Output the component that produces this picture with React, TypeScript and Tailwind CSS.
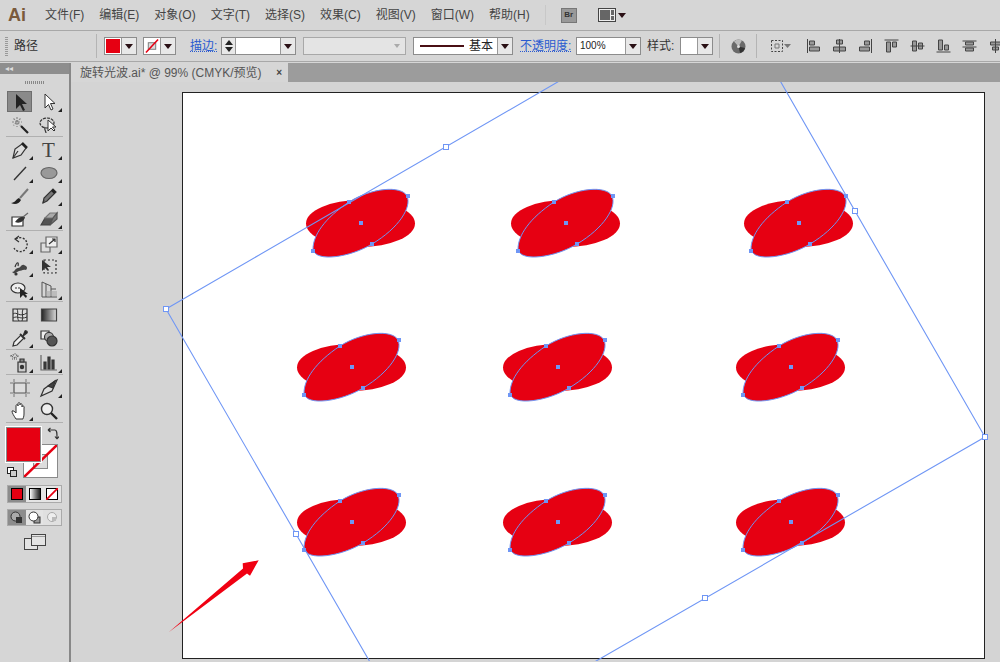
import type { ReactNode } from "react";

const font = { fontFamily: '"Liberation Sans", "Noto Sans CJK SC", sans-serif' };
const menus = ["文件(F)", "编辑(E)", "对象(O)", "文字(T)", "选择(S)", "效果(C)", "视图(V)", "窗口(W)", "帮助(H)"];

const RED = "#e60012";
const BLUE = "#6f96f5";

const Ico = ({ children, size = 20 }: { children: ReactNode; size?: number }) => (
  <svg width={size} height={size} viewBox="0 0 20 20" fill="none" stroke="#333" strokeWidth="1.2">
    {children}
  </svg>
);

const toolSections: { icon: ReactNode; corner?: boolean }[][][] = [
  [
    [
      { icon: <Ico><path d="M6 2V17L10 13L13 19L15 18L12 12H17Z" fill="#222" stroke="none" /></Ico> },
      { icon: <Ico><path d="M6 2V16L9.500 12.500L12 18L14 17L11.500 11.500H16Z" fill="#fff" strokeWidth="1" /></Ico>, corner: true },
    ],
    [
      { icon: <Ico><path d="M11 11L18 18" strokeWidth="2.200" stroke="#222" /><path d="M7 2V12M2 7H12M3.500 3.500L10.500 10.500M10.500 3.500L3.500 10.500" stroke="#888" strokeDasharray="2 1" /></Ico> },
      { icon: <Ico><ellipse cx="8" cy="8" rx="7" ry="5" strokeDasharray="3 1" /><path d="M6 12C5 15 7 16 7 18" /><path d="M9 5V16L12 13L15 16L16 15L13.500 12H17Z" fill="#fff" strokeWidth="1" /></Ico> },
    ],
  ],
  [
    [
      { icon: <Ico><path d="M3 18L5 9L12 4L16 8L11 15Z" fill="#ddd" /><path d="M3 18L8 11" /><path d="M12 3L17 8" strokeWidth="2.500" stroke="#222" /></Ico>, corner: true },
      { icon: <span className="text-[21px] leading-[20px] text-[#444]" style={{ fontFamily: '"Liberation Serif", serif' }}>T</span>, corner: true },
    ],
    [
      { icon: <Ico><path d="M4 17L16 4" strokeWidth="1.400" /></Ico>, corner: true },
      { icon: <Ico><ellipse cx="10" cy="10" rx="8" ry="5.500" fill="#999" stroke="#666" /></Ico>, corner: true },
    ],
    [
      { icon: <Ico><path d="M1 17C5 17 6 13 9 12L11 14C9 18 5 19 1 17Z" fill="#222" stroke="none" /><path d="M10 12L18 3" strokeWidth="2" stroke="#777" /></Ico> },
      { icon: <Ico><path d="M4 17L5 12L14 3L17 6L8 15Z" fill="#777" /><path d="M13 4L16 7" strokeWidth="2.500" stroke="#222" /><path d="M4 17L5 14" /></Ico>, corner: true },
    ],
    [
      { icon: <Ico><path d="M2 8H13V17H2Z" fill="#fff" /><path d="M5 13C8 8 12 7 15 8C14 12 10 15 5 13Z" fill="#333" stroke="none" /><path d="M13 8L18 4" stroke="#666" /></Ico> },
      { icon: <Ico><path d="M2 16L6 9H14L11 16Z" fill="#555" stroke="#444" /><path d="M6 9L11 4H18L14 9Z" fill="#aaa" stroke="#777" /><path d="M14 9L18 4V10L11 16Z" fill="#777" stroke="#555" /></Ico>, corner: true },
    ],
  ],
  [
    [
      { icon: <Ico><path d="M6 5A7 7 0 1 1 4 14" strokeDasharray="2 1.500" strokeWidth="1.400" /><path d="M9 2L5 5L9 8" /></Ico>, corner: true },
      { icon: <Ico><path d="M2 9H11V18H2Z" fill="#ddd" stroke="#666" /><path d="M7 3H18V13H7Z" fill="#eee" stroke="#666" /><path d="M10 10L16 5M13 5H16V8" /></Ico>, corner: true },
    ],
    [
      { icon: <Ico><path d="M2 15C5 15 5 11 8 11C11 11 11 7 14 8C17 9 18 11 16 13C13 12 11 14 9 14C6 15 5 18 2 15Z" fill="#444" stroke="none" /><path d="M5 10C7 4 9 5 8 9" /><circle cx="6" cy="17" r="1" fill="#222" /></Ico>, corner: true },
      { icon: <Ico><path d="M5 3H17V16H5Z" strokeDasharray="2 2" /><path d="M3 3V14L6 11L9 14L10 13L8 10H12Z" fill="#333" stroke="none" /></Ico> },
    ],
    [
      { icon: <Ico><ellipse cx="8" cy="8" rx="7" ry="5" fill="#eee" /><path d="M5 8H11" strokeDasharray="2 1" /><path d="M10 8V18L13 15L16 18L17 16L15 14H18Z" fill="#222" stroke="none" /></Ico>, corner: true },
      { icon: <Ico><path d="M3 2V17M3 2L12 6V17M3 17H18M7 4V17M12 9H17" stroke="#555" strokeWidth="1" /><path d="M7 11H18V16H7Z" fill="#aaa" stroke="none" opacity="0.600" /></Ico>, corner: true },
    ],
  ],
  [
    [
      { icon: <Ico><path d="M3 4H17V16H3Z" fill="#ddd" stroke="#333" /><path d="M3 9C7 6 9 13 17 8M3 13C8 10 10 15 17 12M7 4C9 8 6 12 9 16M13 4C11 8 14 12 12 16" strokeWidth="1" /></Ico> },
      {
        icon: (
          <Ico>
            <defs>
              <linearGradient id="gradTool">
                <stop offset="0" stopColor="#222" />
                <stop offset="1" stopColor="#ddd" />
              </linearGradient>
            </defs>
            <path d="M2.500 4H17.500V16H2.500Z" fill="url(#gradTool)" stroke="#444" />
          </Ico>
        ),
      },
    ],
    [
      { icon: <Ico><path d="M3 18L4 14L11 7L14 10L7 17Z" fill="#eee" /><path d="M10 6L15 11" strokeWidth="1.800" /><path d="M13 8L15 3C16 2 18 4 17 5L13 8Z" fill="#222" /></Ico>, corner: true },
      { icon: <Ico><path d="M2 3H10V11H2Z" fill="#eee" /><circle cx="10" cy="9" r="4.500" fill="#aaa" /><circle cx="13" cy="13" r="5" fill="#555" /></Ico> },
    ],
  ],
  [
    [
      { icon: <Ico><path d="M8 9H16V19H8Z" fill="#ccc" /><path d="M10 6H14V9H10Z" fill="#888" /><circle cx="12" cy="14" r="2.200" fill="#333" stroke="none" /><path d="M1 3L5 1L8 3L5 5ZM2 6H8" strokeDasharray="1 1" stroke="#555" /></Ico>, corner: true },
      { icon: <Ico><path d="M2 2V17H18" stroke="#666" /><path d="M5 9H7V16H5ZM9 4H11V16H9ZM13 7H15V16H13Z" fill="#444" /></Ico>, corner: true },
    ],
  ],
  [
    [
      { icon: <Ico><path d="M4 5H16V15H4Z" fill="#ddd" stroke="#555" /><path d="M4 1V4M16 1V4M4 16V19M16 16V19M0 5H3M0 15H3M17 5H20M17 15H20" stroke="#777" strokeWidth="1" /></Ico> },
      { icon: <Ico><path d="M2 18L5 11L16 3L18 2L13 13Z" fill="#ddd" /><path d="M9 8L16 3L14 10Z" fill="#444" /></Ico>, corner: true },
    ],
    [
      { icon: <Ico><path d="M6 18C4 15 2 12 2 10C3 9 5 11 6 12V5C6 3 8 3 8 5V3C8 1 10 1 10 3V4C10 2 12 2 12 4V6C12 4 15 5 14 7V13C14 16 13 17 13 18Z" fill="#fff" strokeWidth="1" /></Ico>, corner: true },
      { icon: <Ico><circle cx="8" cy="8" r="5.500" fill="#eee" strokeWidth="1.400" /><path d="M12 12L18 18" strokeWidth="2.400" stroke="#222" /></Ico> },
    ],
  ],
];

const ToolCell = ({ icon, corner, active }: { icon: ReactNode; corner?: boolean; active?: boolean }) => (
  <div className="relative flex h-[23px] w-[29px] items-center justify-center">
    {active && <span className="absolute inset-x-[2px] inset-y-[1px] border border-[#6e6e6e] bg-[#8a8a8a]" />}
    <span className="relative flex">{icon}</span>
    {corner && (
      <span className="absolute bottom-[1px] right-[1px] h-0 w-0 border-b-[4px] border-l-[4px] border-b-[#222] border-l-transparent" />
    )}
  </div>
);

const ToolPanel = () => (
  <aside className="flex w-[69px] shrink-0 flex-col bg-[#d6d6d6]">
    <div className="flex h-[11px] items-center bg-[#8e8e8e] pl-[5px] text-[8px] leading-none text-[#ddd]">◂◂</div>
    <div className="flex h-[16px] items-center justify-center">
      <div className="h-[3px] w-[20px] bg-[repeating-linear-gradient(90deg,#888_0,#888_1px,transparent_1px,transparent_2px)]" />
    </div>
    {toolSections.map((rows, s) => (
      <div key={s}>
        {s > 0 && <div className="mx-[6px] mb-[1px] h-[1px] bg-[#b0b0b0]" />}
        {rows.map((row, r) => (
          <div key={r} className="flex justify-center pl-[1px] pr-[2px]">
            {row.map((t, c) => (
              <ToolCell key={c} icon={t.icon} corner={t.corner} active={s === 0 && r === 0 && c === 0} />
            ))}
          </div>
        ))}
      </div>
    ))}
    <div className="mx-[6px] h-[1px] bg-[#b0b0b0]" />

    {/* fill / stroke */}
    <div className="relative mt-[4px] h-[52px] shrink-0">
      <div className="absolute left-[23px] top-[17px] h-[34px] w-[35px] border border-[#8a8a8a] bg-white">
        <div className="absolute left-[9px] top-[9px] h-[15px] w-[15px] border border-[#8a8a8a] bg-[#ddd]" />
        <svg className="absolute inset-0" width="33" height="32" viewBox="0 0 33 32">
          <path d="M0 32L33 0" stroke={RED} strokeWidth="2.500" />
        </svg>
      </div>
      <div className="absolute left-[6px] top-0 h-[35px] w-[35px] border border-[#8a8a8a] bg-[#e60012] outline-1 outline-white" />
      <svg className="absolute left-[47px] top-[0px]" width="12" height="14" viewBox="0 0 12 14" fill="none" stroke="#333" strokeWidth="1.200">
        <path d="M1 3H8C10 3 10 6 10 11M1 3L3.500 1M1 3L3.500 5M10 12L8 9.500M10 12L12 9.500" />
      </svg>
      <div className="absolute left-[7px] top-[40px] h-[7px] w-[7px] border border-[#222] bg-white" />
      <div className="absolute left-[10px] top-[43px] h-[7px] w-[7px] border border-[#222] bg-[#ccc]" />
    </div>

    <div className="mx-[7px] mt-[6px] flex h-[18px] border border-[#aaa] bg-[#c4c4c4]">
      <div className="flex flex-1 items-center justify-center bg-[#8c8c8c]">
        <div className="h-[12px] w-[12px] border border-black bg-[#e60012]" />
      </div>
      <div className="flex flex-1 items-center justify-center bg-[#e4e4e4]">
        <div className="h-[12px] w-[12px] border border-black bg-gradient-to-r from-white to-[#222]" />
      </div>
      <div className="flex flex-1 items-center justify-center bg-[#e4e4e4]">
        <svg width="12" height="12" viewBox="0 0 12 12">
          <rect x="0.500" y="0.500" width="11" height="11" fill="#fff" stroke="#000" />
          <path d="M0 12L12 0" stroke={RED} strokeWidth="1.800" />
        </svg>
      </div>
    </div>

    <div className="mx-[7px] mt-[6px] flex h-[17px] border border-[#aaa] bg-[#c4c4c4]">
      <div className="flex flex-1 items-center justify-center bg-[#8c8c8c]">
        <svg width="13" height="13" viewBox="0 0 13 13">
          <circle cx="5.500" cy="5.500" r="4.500" fill="#aaa" stroke="#333" />
          <rect x="6" y="6" width="6" height="6" fill="#333" />
        </svg>
      </div>
      <div className="flex flex-1 items-center justify-center bg-[#e4e4e4]">
        <svg width="13" height="13" viewBox="0 0 13 13">
          <rect x="6" y="6" width="6" height="6" fill="#999" stroke="#333" />
          <circle cx="5.500" cy="5.500" r="4.500" fill="#fff" stroke="#333" />
        </svg>
      </div>
      <div className="flex flex-1 items-center justify-center bg-[#e0e0e0]">
        <svg width="13" height="13" viewBox="0 0 13 13">
          <circle cx="6" cy="6" r="4.500" fill="#eee" stroke="#aaa" />
          <rect x="6" y="6" width="4" height="4" fill="#bbb" />
        </svg>
      </div>
    </div>

    <div className="mt-[8px] flex justify-center pl-[1px]">
      <svg width="22" height="16" viewBox="0 0 22 16" fill="#e4e4e4" stroke="#444">
        <rect x="0.500" y="4.500" width="13" height="11" />
        <rect x="7.500" y="0.500" width="14" height="11" />
        <path d="M8 2.500H21" stroke="#999" />
      </svg>
    </div>
  </aside>
);

const Arrow = ({ className = "" }: { className?: string }) => (
  <span className={`inline-block h-0 w-0 border-x-[4px] border-t-[5px] border-x-transparent border-t-[#2a1015] ${className}`} />
);

const DropBtn = () => (
  <span className="flex h-full w-[15px] shrink-0 items-center justify-center border-l border-[#999] bg-[#e8e8e8]">
    <Arrow />
  </span>
);

const Box = ({ className, children }: { className: string; children?: ReactNode }) => (
  <div className={`flex h-[18px] shrink-0 items-stretch border border-[#8c8c8c] bg-white ${className}`}>{children}</div>
);

const Sep = ({ className }: { className: string }) => <div className={`h-[24px] w-[1px] shrink-0 bg-[#b4b4b4] ${className}`} />;

const alignIcons = [
  "M1 0V14M3 2H8V6H3ZM3 8H13V12H3Z",
  "M7 0V14M4 1H10V5H4ZM1 8H13V12H1Z",
  "M13 0V14M6 2H11V6H6ZM1 8H11V12H1Z",
  "M0 1H14M2 3H6V13H2ZM8 3H12V8H8Z",
  "M0 7H14M2 2H6V12H2ZM8 4H12V10H8Z",
  "M0 13H14M2 1H6V11H2ZM8 6H12V11H8Z",
  "M0 2H14M3 3H11V6H3ZM0 8H14M3 9H11V12H3Z",
  "M7 0V14M2 3H12V6H2ZM4 8H10V11H4Z",
];

const ControlBar = () => (
  <div className="flex h-[32px] shrink-0 items-center border-y border-[#a8a8a8] bg-[#d6d6d6] pl-[5px]">
    <div className="h-[20px] w-[3px] shrink-0 bg-[repeating-linear-gradient(0deg,#999_0,#999_1px,transparent_1px,transparent_2px)]" />
    <span className="ml-[6px] w-[72px] shrink-0 text-[12px] text-[#333]">路径</span>
    <Sep className="mr-[7px] ml-[10px]" />
    <Box className="w-[33px]">
      <span className="m-[1px] w-[15px] bg-[#e60012]" />
      <DropBtn />
    </Box>
    <Box className="ml-[6px] w-[33px]">
      <svg className="m-[1px]" width="15" height="14" viewBox="0 0 15 14">
        <rect x="3.500" y="3.500" width="8" height="7" fill="#ddd" stroke="#777" />
        <path d="M1 14L14 0" stroke={RED} strokeWidth="1.600" />
      </svg>
      <DropBtn />
    </Box>
    <span className="ml-[14px] w-[27px] shrink-0 whitespace-nowrap text-[12px] text-[#2a5bd0] underline decoration-dotted">描边:</span>
    <Box className="ml-[4px] w-[75px]">
      <span className="flex w-[14px] flex-col items-center justify-center gap-[2px] border-r border-[#999] bg-[#e8e8e8]">
        <span className="h-0 w-0 border-x-[4px] border-b-[5px] border-x-transparent border-b-[#222]" />
        <span className="h-0 w-0 border-x-[4px] border-t-[5px] border-x-transparent border-t-[#222]" />
      </span>
      <span className="flex-1" />
      <DropBtn />
    </Box>
    <div className="ml-[7px] flex h-[18px] w-[103px] shrink-0 items-center justify-end border border-[#a8a8a8] bg-[#e4e4e4] pr-[5px]">
      <span className="h-0 w-0 border-x-[3px] border-t-[4px] border-x-transparent border-t-[#aaa]" />
    </div>
    <Box className="ml-[7px] w-[100px]">
      <span className="flex flex-1 items-center gap-[5px] pl-[6px]">
        <span className="h-[2px] w-[44px] bg-[#4a0f14]" />
        <span className="text-[12px] leading-none text-[#222]">基本</span>
      </span>
      <DropBtn />
    </Box>
    <span className="ml-[7px] w-[50px] shrink-0 whitespace-nowrap text-[12px] text-[#2a5bd0] underline decoration-dotted">不透明度:</span>
    <Box className="ml-[6px] w-[65px]">
      <span className="flex-1 pl-[3px] text-[10px] leading-[16px] text-[#222]">100%</span>
      <DropBtn />
    </Box>
    <span className="ml-[6px] w-[28px] shrink-0 whitespace-nowrap text-[12px] text-[#333]">样式:</span>
    <Box className="ml-[5px] w-[33px]">
      <span className="flex-1" />
      <DropBtn />
    </Box>
    <Sep className="ml-[6px]" />
    <svg className="ml-[11px] shrink-0" width="15" height="15" viewBox="0 0 15 15">
      <circle cx="7.500" cy="7.500" r="7" fill="#6a6a6a" />
      <path d="M7.500 7.500L3 2.500A7 7 0 0 1 11 1.500Z" fill="#bbb" />
      <path d="M7.500 7.500L14 9A7 7 0 0 1 9 14Z" fill="#333" />
      <circle cx="7.500" cy="7.500" r="1.500" fill="#ddd" />
    </svg>
    <Sep className="ml-[10px]" />
    <svg className="ml-[12px] shrink-0" width="22" height="16" viewBox="0 0 22 16" fill="none" stroke="#444">
      <rect x="2.500" y="2.500" width="11" height="11" strokeDasharray="2 1.500" />
      <path d="M6 6H10V10H6Z" stroke="#777" />
      <path d="M15 6H22L18.500 10Z" fill="#777" stroke="none" />
    </svg>
    <div className="ml-[15px] flex shrink-0 gap-[11px]">
      {alignIcons.map((d, i) => (
        <svg key={i} width="15" height="14" viewBox="0 0 14 14" fill="#999" stroke="#444" className="shrink-0">
          <path d={d} />
        </svg>
      ))}
    </div>
  </div>
);

const groups: [number, number][] = [
  [361, 224], [566, 224], [799, 224],
  [352, 368], [558, 368], [791, 368],
  [352, 523], [558, 523], [791, 523],
];

const anchors: [number, number][] = [[-48, 28], [47, -27], [-12, -21], [11, 21], [0, 0]];
const handles: [number, number][] = [[166, 310], [446, 148], [855, 212], [985, 438], [705, 599], [296, 535]];

// the rotated oval is rounder than a true ellipse, it runs through the four anchors
const oval = "M-48 26C-48 12 -36 -5 -12 -21C10 -35 40 -38 46 -27C51 -16 38 5 11 21C-10 34 -46 40 -48 26Z";

const Canvas = () => (
  <svg className="absolute inset-0" width="929" height="579" viewBox="71 83 929 579">
    {groups.map(([x, y]) => (
      <g key={`${x}-${y}`}>
        <ellipse cx={x - 0.5} cy={y + 0.5} rx="54.5" ry="23.5" fill={RED} />
        <path d={oval} fill={RED} stroke={BLUE} strokeWidth="1" transform={`translate(${x} ${y})`} />
        {anchors.map(([dx, dy]) => (
          <rect key={`${dx}-${dy}`} x={x + dx - 2} y={y + dy - 2} width="4" height="4" fill={BLUE} />
        ))}
      </g>
    ))}
    <path d="M166 310L725 -14L985 438L426 760Z" fill="none" stroke={BLUE} strokeWidth="1.100" />
    {handles.map(([x, y]) => (
      <rect key={`${x}-${y}`} x={x - 2.500} y={y - 2.500} width="5" height="5" fill="#fff" stroke={BLUE} />
    ))}
    <path d="M168.700 633.300L243 569.500L242.700 564.300L258.700 561.300L250 576.700L247 574.500Z" fill="#f00012" />
  </svg>
);

export default function App() {
  return (
    <div className="flex h-[662px] w-[1000px] flex-col overflow-hidden bg-[#d6d6d6]" style={font}>
      {/* menu bar */}
      <div className="flex h-[30px] shrink-0 items-center">
        <span className="ml-[8px] w-[37px] text-[18px] font-bold leading-none text-[#7a5a3c]">Ai</span>
        <nav className="flex gap-[15px] text-[12px] text-[#444]">
          {menus.map((m) => (
            <span key={m} className="whitespace-nowrap">{m}</span>
          ))}
        </nav>
        <div className="ml-[15px] h-[20px] w-[1px] bg-[#c8c8c8]" />
        <span className="ml-[15px] flex h-[15px] w-[16px] items-center justify-center border border-[#777] bg-[#999] text-[8px] font-bold text-[#333]">Br</span>
        <span className="ml-[21px] grid h-[14px] w-[18px] grid-cols-[10px_1fr] grid-rows-2 gap-[1px] border border-[#444] bg-[#eee] p-[1px]">
          <span className="row-span-2 bg-[#666]" />
          <span className="bg-[#666]" />
          <span className="bg-[#666]" />
        </span>
        <Arrow className="ml-[2px]" />
      </div>

      <ControlBar />

      <div className="flex min-h-0 flex-1 pt-[1px]">
        <ToolPanel />
        <div className="w-[2px] shrink-0 bg-[#888]" />
        <main className="flex min-w-0 flex-1 flex-col">
          <div className="flex h-[19px] shrink-0 items-stretch bg-[#9c9c9c]">
            <div className="flex w-[217px] items-center bg-[#d6d6d6] pl-[9px] text-[12px] text-[#555]">
              <span className="whitespace-nowrap">旋转光波.ai* @ 99% (CMYK/预览)</span>
              <span className="ml-auto mr-[6px] text-[10px] font-bold leading-none text-[#444]">×</span>
            </div>
          </div>
          <div className="relative min-h-0 flex-1 overflow-hidden bg-[#d4d4d4] pl-[111px] pt-[10px]">
            <div className="h-[567px] w-[803px] border border-[#222] bg-white" />
            <Canvas />
          </div>
        </main>
      </div>
    </div>
  );
}
